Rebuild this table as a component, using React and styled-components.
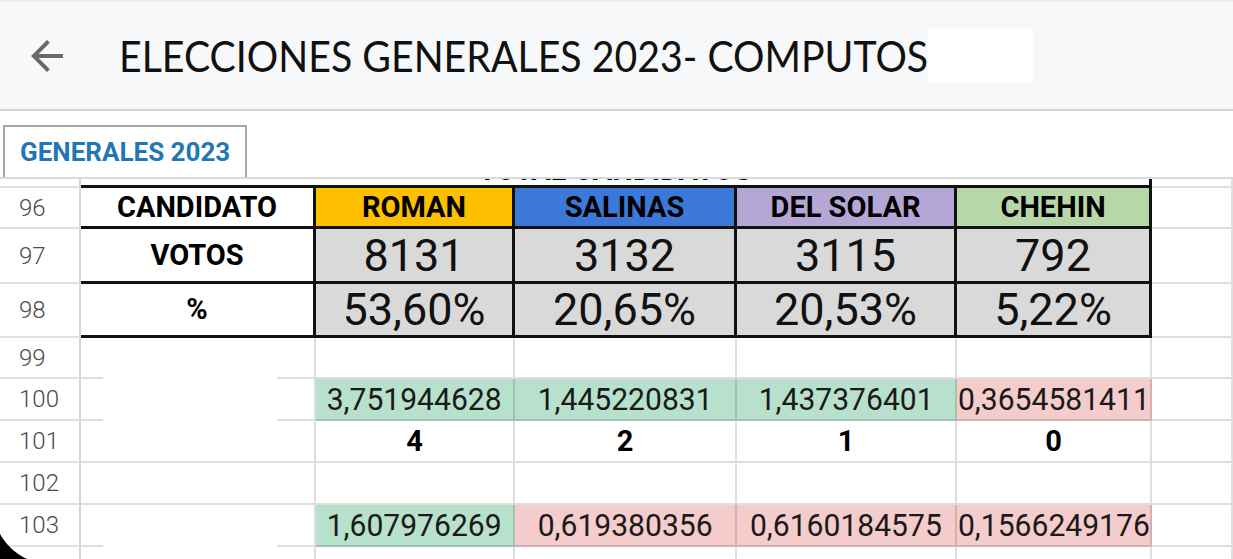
import React from "react";
import styled, { createGlobalStyle } from "styled-components";
import { MdArrowBack } from "react-icons/md";

const GlobalStyle = createGlobalStyle`
  html, body {
    margin: 0;
    padding: 0;
    background: #fff;
  }
  body {
    width: 1233px;
    height: 559px;
    overflow: hidden;
    font-family: Roboto, "Liberation Sans", sans-serif;
  }
`;

const Screen = styled.div`
  position: relative;
  width: 1233px;
  height: 559px;
  overflow: hidden;
  display: flex;
  flex-direction: column;
`;

const TopBar = styled.header`
  flex: 0 0 auto;
  height: 111px;
  box-sizing: border-box;
  border-top: 2px solid #e8eaed;
  border-bottom: 2px solid #d4d4d4;
  background: #f7f8f9;
  display: flex;
  align-items: center;
  padding-left: 23px;
`;

const BackButton = styled.div`
  display: flex;
  color: #696969;
  margin-right: 48px;
`;

const TitleBox = styled.div`
  width: 809px;
  white-space: nowrap;
`;

const TitleText = styled.h1`
  display: inline-block;
  margin: 0;
  font-family: Lato, "Open Sans", sans-serif;
  font-weight: 400;
  font-size: 42px;
  color: #111;
  transform: scaleX(0.935);
  transform-origin: left center;
`;

const Blank = styled.div`
  width: 105px;
  height: 55px;
  background: #fff;
`;

const TabBar = styled.div`
  flex: 0 0 auto;
  height: 68px;
  box-sizing: border-box;
  border-bottom: 2px solid #d9d9d9;
  display: flex;
  align-items: flex-end;
  padding-left: 3px;
`;

const Tab = styled.div`
  width: 244px;
  height: 52px;
  box-sizing: border-box;
  border: 2px solid #a6a6a6;
  border-bottom: none;
  display: flex;
  align-items: center;
  padding-left: 15px;
  color: #1f77b6;
  font-weight: 700;
  font-size: 26px;
`;

const Viewport = styled.div`
  flex: 1;
  overflow: hidden;
`;

const Grid = styled.div`
  margin-top: -31px;
  display: grid;
  grid-template-columns: 81px 235px 199px 222px 220px 195px 1fr;
`;

const grid = "2px solid rgba(0, 0, 0, 0.13)";
const black = "3px solid #111";

const RowHead = styled.div`
  height: ${(p) => p.$h}px;
  box-sizing: border-box;
  border-right: 2px solid #d4d4d4;
  border-bottom: 2px solid #e0e0e0;
  display: flex;
  align-items: center;
  padding-left: 19px;
  color: #4a4a4a;
  font-size: 24px;
  font-weight: 300;
`;

const Cell = styled.div`
  position: relative;
  height: ${(p) => p.$h}px;
  box-sizing: border-box;
  grid-column: span ${(p) => p.$span || 1};
  background: ${(p) => p.$bg || "#fff"};
  border-right: ${(p) => (p.$br ? black : grid)};
  border-bottom: ${(p) => (p.$bb ? black : grid)};
  display: flex;
  align-items: ${(p) => (p.$low ? "flex-end" : "center")};
  justify-content: center;
  white-space: nowrap;

  ${(p) =>
    p.$patch &&
    `
    &::after {
      content: "";
      position: absolute;
      left: 22px;
      right: 37px;
      top: ${p.$patch === "both" ? "-2px" : "0"};
      bottom: -2px;
      background: #fff;
    }
  `}
`;

const Label = styled.span`
  font-weight: 700;
  font-size: 29px;
  line-height: 1;
  color: #000;
`;

const Big = styled.span`
  font-size: 45px;
  line-height: 1;
  color: #111;
`;

const Num = styled.span`
  font-size: 31px;
  line-height: 1;
  color: #1a1a1a;
  transform: scaleX(0.97);
`;

const Corner = styled.div`
  position: absolute;
  left: 0;
  bottom: 0;
  width: 60px;
  height: 30px;
  background: radial-gradient(
    circle 60px at 52px -24px,
    transparent 59px,
    #000 60px
  );
`;

const candidates = [
  { name: "ROMAN", color: "#fdbf00", votes: "8131", pct: "53,60%", a: "3,751944628", aOk: true, seats: "4", b: "1,607976269", bOk: true },
  { name: "SALINAS", color: "#3c78d8", votes: "3132", pct: "20,65%", a: "1,445220831", aOk: true, seats: "2", b: "0,619380356", bOk: false },
  { name: "DEL SOLAR", color: "#b4a7d6", votes: "3115", pct: "20,53%", a: "1,437376401", aOk: true, seats: "1", b: "0,6160184575", bOk: false },
  { name: "CHEHIN", color: "#b6d7a8", votes: "792", pct: "5,22%", a: "0,3654581411", aOk: false, seats: "0", b: "0,1566249176", bOk: false },
];

const green = "#b7e1cd";
const red = "#f4cccc";

const rows = [
  {
    n: 95,
    hideNum: true,
    h: 40,
    cells: [
      { span: 5, low: true, br: true, bb: true, content: <Label>TOTAL CANDIDATOS</Label> },
      {},
    ],
  },
  {
    n: 96,
    h: 41,
    cells: [
      { br: true, bb: true, content: <Label>CANDIDATO</Label> },
      ...candidates.map((c) => ({ br: true, bb: true, bg: c.color, content: <Label>{c.name}</Label> })),
      {},
    ],
  },
  {
    n: 97,
    h: 55,
    cells: [
      { br: true, bb: true, content: <Label>VOTOS</Label> },
      ...candidates.map((c) => ({ br: true, bb: true, bg: "#d9d9d9", content: <Big>{c.votes}</Big> })),
      {},
    ],
  },
  {
    n: 98,
    h: 54,
    cells: [
      { br: true, bb: true, content: <Label>%</Label> },
      ...candidates.map((c) => ({ br: true, bb: true, bg: "#d9d9d9", content: <Big>{c.pct}</Big> })),
      {},
    ],
  },
  { n: 99, h: 41, cells: [{}, {}, {}, {}, {}, {}] },
  {
    n: 100,
    h: 42,
    cells: [
      { patch: "both" },
      ...candidates.map((c) => ({ bg: c.aOk ? green : red, content: <Num>{c.a}</Num> })),
      {},
    ],
  },
  {
    n: 101,
    h: 42,
    cells: [{}, ...candidates.map((c) => ({ content: <Label>{c.seats}</Label> })), {}],
  },
  { n: 102, h: 42, cells: [{}, {}, {}, {}, {}, {}] },
  {
    n: 103,
    h: 42,
    cells: [
      { patch: "bottom" },
      ...candidates.map((c) => ({ bg: c.bOk ? green : red, content: <Num>{c.b}</Num> })),
      {},
    ],
  },
  { n: 104, hideNum: true, h: 42, cells: [{}, {}, {}, {}, {}, {}] },
];

export default function App() {
  return (
    <>
      <GlobalStyle />
      <Screen>
        <TopBar>
          <BackButton>
            <MdArrowBack size={48} />
          </BackButton>
          <TitleBox>
            <TitleText>ELECCIONES GENERALES 2023- COMPUTOS</TitleText>
          </TitleBox>
          <Blank />
        </TopBar>
        <TabBar>
          <Tab>GENERALES 2023</Tab>
        </TabBar>
        <Viewport>
          <Grid>
            {rows.map((row) => (
              <React.Fragment key={row.n}>
                <RowHead $h={row.h}>{row.hideNum ? "" : row.n}</RowHead>
                {row.cells.map((c, i) => (
                  <Cell
                    key={i}
                    $h={row.h}
                    $span={c.span}
                    $bg={c.bg}
                    $br={c.br}
                    $bb={c.bb}
                    $low={c.low}
                    $patch={c.patch}
                  >
                    {c.content}
                  </Cell>
                ))}
              </React.Fragment>
            ))}
          </Grid>
        </Viewport>
        <Corner />
      </Screen>
    </>
  );
}
